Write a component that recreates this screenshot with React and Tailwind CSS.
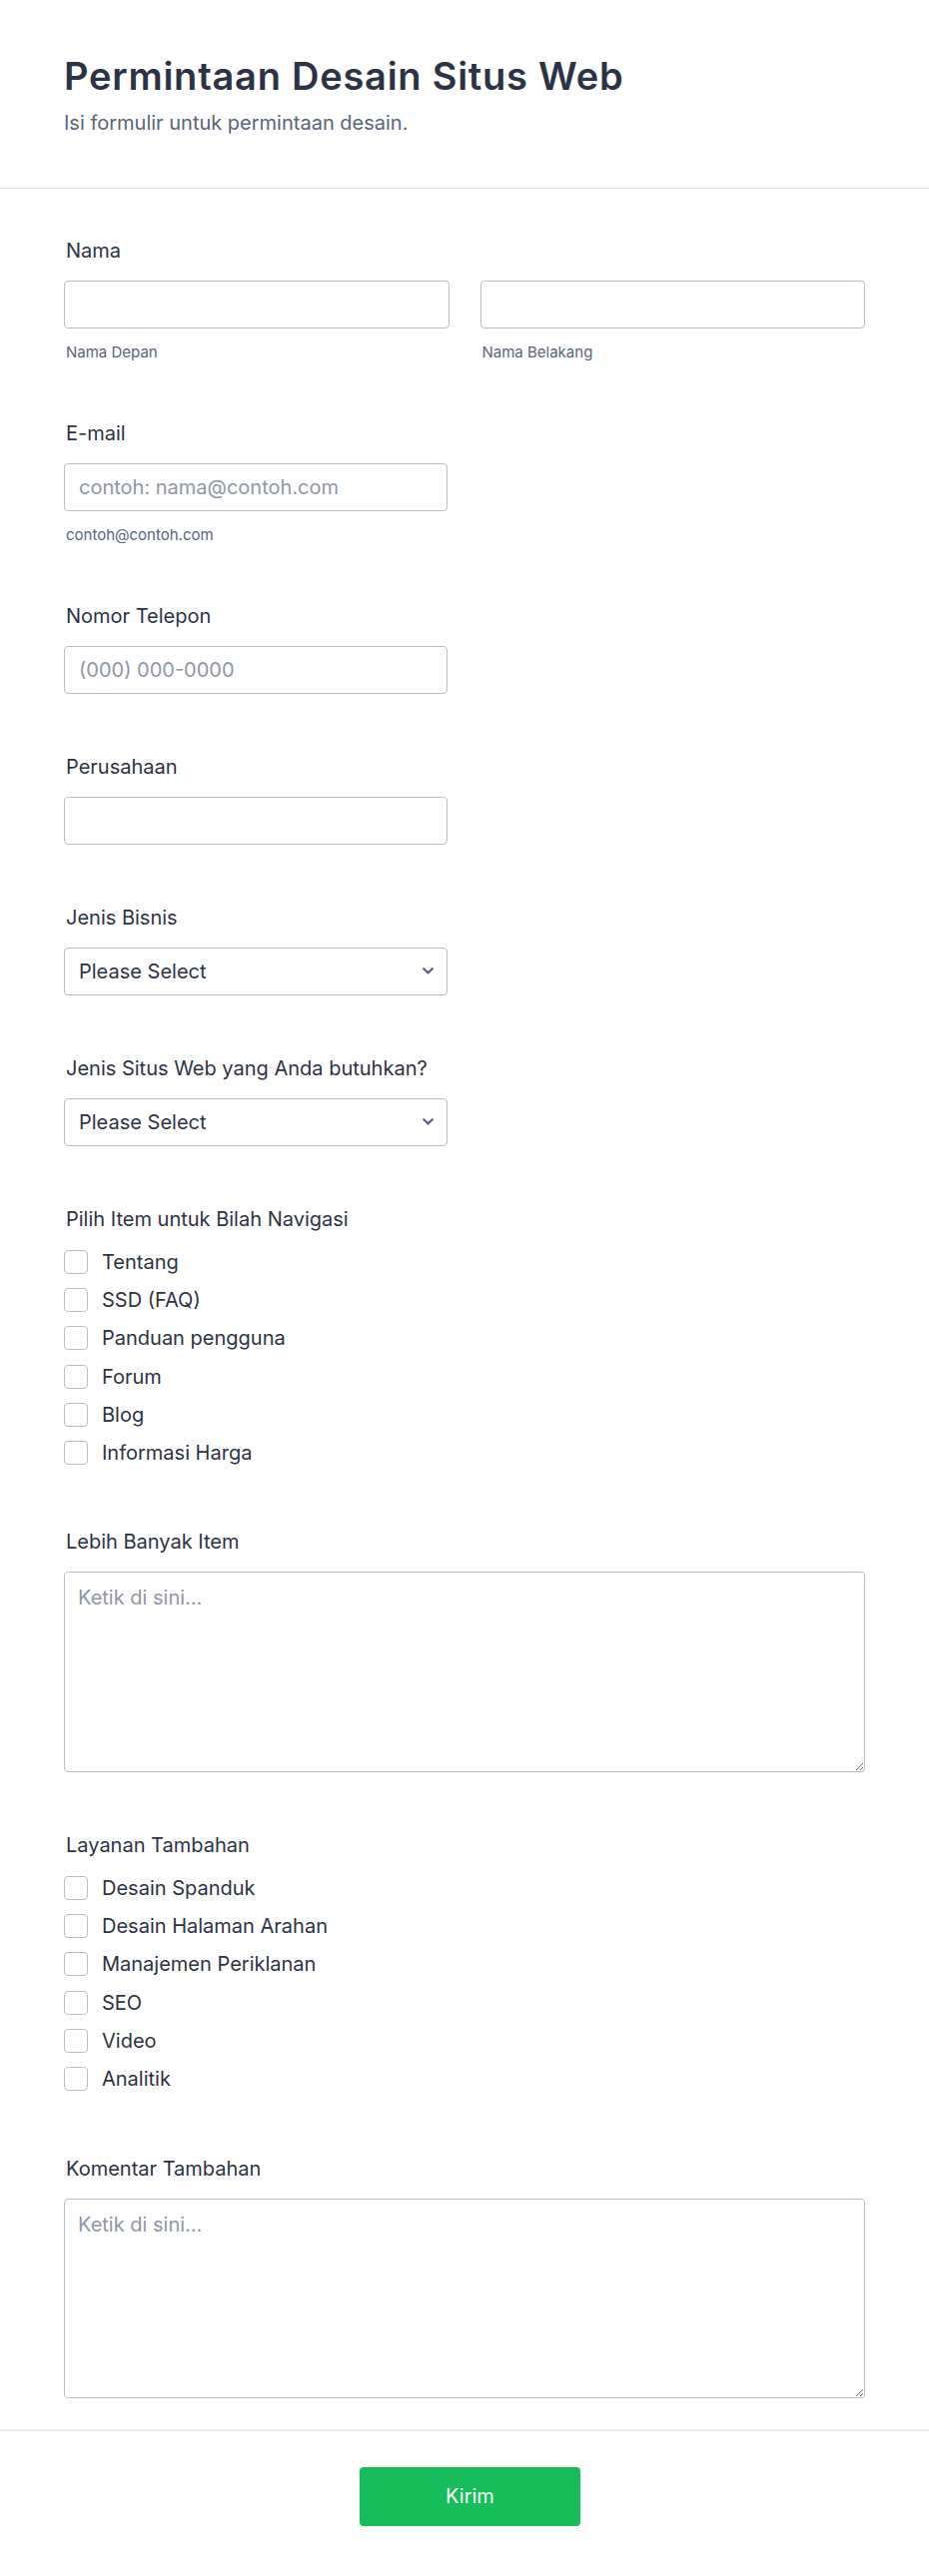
import React from 'react'

const FONT = { fontFamily: 'Inter, "Noto Sans", "Liberation Sans", sans-serif' }

const NAV_ITEMS = ['Tentang', 'SSD (FAQ)', 'Panduan pengguna', 'Forum', 'Blog', 'Informasi Harga']
const SERVICES = ['Desain Spanduk', 'Desain Halaman Arahan', 'Manajemen Periklanan', 'SEO', 'Video', 'Analitik']

const inputCls =
  'block h-[48px] w-full rounded-[4px] border border-[#b8bdc9] bg-white px-[14px] text-[20px] text-[#2c3345] outline-none placeholder:text-[#8f96a6]'

const Label = ({ children }) => (
  <div className="pl-[2px] text-[20px] leading-[30px] font-normal text-[#2c3345]">{children}</div>
)

const SubLabel = ({ children }) => (
  <div className="mt-[15px] pl-[2px] text-[15px] leading-[18px] text-[#57647e]">{children}</div>
)

const Select = () => (
  <div className="relative mt-[15px] w-[384px]">
    <select className="block h-[48px] w-full appearance-none rounded-[4px] border border-[#b8bdc9] bg-white px-[14px] text-[20px] text-[#2c3345] outline-none">
      <option>Please Select</option>
    </select>
    <svg
      className="pointer-events-none absolute right-[14px] top-[20px]"
      width="11"
      height="7"
      viewBox="0 0 11 7"
      fill="none"
    >
      <path d="M1.2 1.2 5.5 5.4 9.8 1.2" stroke="#57647e" strokeWidth="2.2" strokeLinecap="round" strokeLinejoin="round" />
    </svg>
  </div>
)

const CheckList = ({ items }) => (
  <div className="mt-[9px]">
    {items.map((item) => (
      <label key={item} className="flex h-[38.33px] items-center">
        <span className="block h-[24px] w-[24px] shrink-0 rounded-[4px] border border-[#b8bdc9] bg-white" />
        <span className="ml-[14px] text-[20px] leading-[30px] text-[#2c3345]">{item}</span>
      </label>
    ))}
  </div>
)

const TextArea = ({ height }) => (
  <textarea
    placeholder="Ketik di sini..."
    className={`mt-[15px] block w-full resize-y rounded-[4px] border border-[#b8bdc9] bg-white px-[13px] py-[10px] text-[20px] leading-[30px] text-[#2c3345] outline-none placeholder:text-[#8f96a6] ${height}`}
  />
)

export default function App() {
  return (
    <div className="min-h-screen bg-white" style={FONT}>
      <header className="border-b border-[#d8e1e6] px-[64px] pt-[54px] pb-[50px]">
        <h1 className="text-[38px] leading-[1.2] font-semibold tracking-[0.02em] text-[#2c3345]">Permintaan Desain Situs Web</h1>
        <p className="mt-[8px] text-[20px] leading-[30px] text-[#57647e]">Isi formulir untuk permintaan desain.</p>
      </header>

      <main className="border-b-2 border-[#eaebf2] px-[64px] pt-[47px] pb-[31px]">
        <section>
          <Label>Nama</Label>
          <div className="mt-[15px] grid grid-cols-2 gap-[31px]">
            <div>
              <input className={inputCls} />
              <SubLabel>Nama Depan</SubLabel>
            </div>
            <div>
              <input className={inputCls} />
              <SubLabel>Nama Belakang</SubLabel>
            </div>
          </div>
        </section>

        <section className="mt-[57px]">
          <Label>E-mail</Label>
          <div className="mt-[15px] w-[384px]">
            <input className={inputCls} placeholder="contoh: nama@contoh.com" />
          </div>
          <SubLabel>contoh@contoh.com</SubLabel>
        </section>

        <section className="mt-[57px]">
          <Label>Nomor Telepon</Label>
          <div className="mt-[15px] w-[384px]">
            <input className={inputCls} placeholder="(000) 000-0000" />
          </div>
        </section>

        <section className="mt-[58px]">
          <Label>Perusahaan</Label>
          <div className="mt-[15px] w-[384px]">
            <input className={inputCls} />
          </div>
        </section>

        <section className="mt-[58px]">
          <Label>Jenis Bisnis</Label>
          <Select />
        </section>

        <section className="mt-[58px]">
          <Label>Jenis Situs Web yang Anda butuhkan?</Label>
          <Select />
        </section>

        <section className="mt-[58px]">
          <Label>Pilih Item untuk Bilah Navigasi</Label>
          <CheckList items={NAV_ITEMS} />
        </section>

        <section className="mt-[54px]">
          <Label>Lebih Banyak Item</Label>
          <TextArea height="h-[201px]" />
        </section>

        <section className="mt-[58px]">
          <Label>Layanan Tambahan</Label>
          <CheckList items={SERVICES} />
        </section>

        <section className="mt-[55px]">
          <Label>Komentar Tambahan</Label>
          <TextArea height="h-[200px]" />
        </section>
      </main>

      <footer className="flex justify-center pt-[36px] pb-[50px] pl-[11px]">
        <button className="h-[59px] w-[221px] rounded-[4px] bg-[#18bd5b] text-[20px] text-white">Kirim</button>
      </footer>
    </div>
  )
}
